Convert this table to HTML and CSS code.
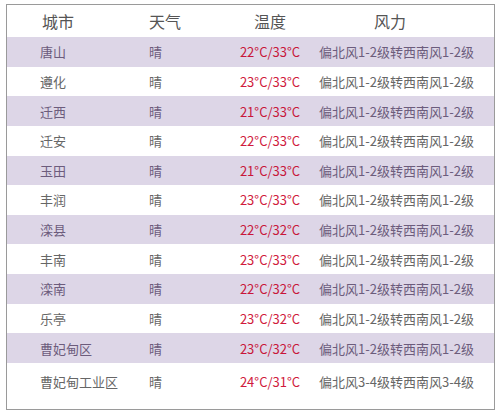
FILE: index.html
```html
<!DOCTYPE html>
<html lang="zh">
<head>
<meta charset="utf-8">
<link rel="stylesheet" href="styles.css">
</head>
<body>
<div class="box">
  <div class="row head">
    <div class="c1">城市</div><div class="c2">天气</div><div class="c3">温度</div><div class="c4">风力</div>
  </div>
  <div class="row alt"><div class="c1">唐山</div><div class="c2">晴</div><div class="c3 t">22°C/33°C</div><div class="c4">偏北风1-2级转西南风1-2级</div></div>
  <div class="row"><div class="c1">遵化</div><div class="c2">晴</div><div class="c3 t">23°C/33°C</div><div class="c4">偏北风1-2级转西南风1-2级</div></div>
  <div class="row alt"><div class="c1">迁西</div><div class="c2">晴</div><div class="c3 t">21°C/33°C</div><div class="c4">偏北风1-2级转西南风1-2级</div></div>
  <div class="row"><div class="c1">迁安</div><div class="c2">晴</div><div class="c3 t">22°C/33°C</div><div class="c4">偏北风1-2级转西南风1-2级</div></div>
  <div class="row alt"><div class="c1">玉田</div><div class="c2">晴</div><div class="c3 t">21°C/33°C</div><div class="c4">偏北风1-2级转西南风1-2级</div></div>
  <div class="row"><div class="c1">丰润</div><div class="c2">晴</div><div class="c3 t">23°C/33°C</div><div class="c4">偏北风1-2级转西南风1-2级</div></div>
  <div class="row alt"><div class="c1">滦县</div><div class="c2">晴</div><div class="c3 t">22°C/32°C</div><div class="c4">偏北风1-2级转西南风1-2级</div></div>
  <div class="row"><div class="c1">丰南</div><div class="c2">晴</div><div class="c3 t">23°C/33°C</div><div class="c4">偏北风1-2级转西南风1-2级</div></div>
  <div class="row alt"><div class="c1">滦南</div><div class="c2">晴</div><div class="c3 t">22°C/32°C</div><div class="c4">偏北风1-2级转西南风1-2级</div></div>
  <div class="row"><div class="c1">乐亭</div><div class="c2">晴</div><div class="c3 t">23°C/32°C</div><div class="c4">偏北风1-2级转西南风1-2级</div></div>
  <div class="row alt"><div class="c1">曹妃甸区</div><div class="c2">晴</div><div class="c3 t">23°C/32°C</div><div class="c4">偏北风1-2级转西南风1-2级</div></div>
  <div class="row last"><div class="c1">曹妃甸工业区</div><div class="c2">晴</div><div class="c3 t">24°C/31°C</div><div class="c4">偏北风3-4级转西南风3-4级</div></div>
</div>
</body>
</html>
```

FILE: styles.css
```css
html, body {
  margin: 0;
  padding: 0;
  background: #ffffff;
}
body {
  padding: 4px 0 0 6px;
  font-family: "Noto Sans CJK SC", "Noto Sans", sans-serif;
}
.box {
  box-sizing: border-box;
  width: 489px;
  height: 406px;
  border: 1px solid #9a9a9a;
  background: #fff;
}
.row {
  display: grid;
  grid-template-columns: 142px 72px 98px 154px;
  align-items: center;
  height: 29.64px;
  font-size: 13px;
  color: #666666;
  white-space: nowrap;
}
.row.alt {
  background: #ddd6e7;
  color: #6c5c7c;
}
.row.head {
  height: 32px;
  font-size: 16px;
  color: #555555;
}
.row.last {
  height: 38px;
}
.c1 { padding-left: 33px; }
.c2 { padding-left: 0; }
.c3 { text-align: center; }
.c4 { text-align: center; }
.head .c1 { padding-left: 35px; }
.head .c4 { padding-right: 12px; }
.t { color: #d01a3c; }
.alt .t { color: #c8163a; }
```
